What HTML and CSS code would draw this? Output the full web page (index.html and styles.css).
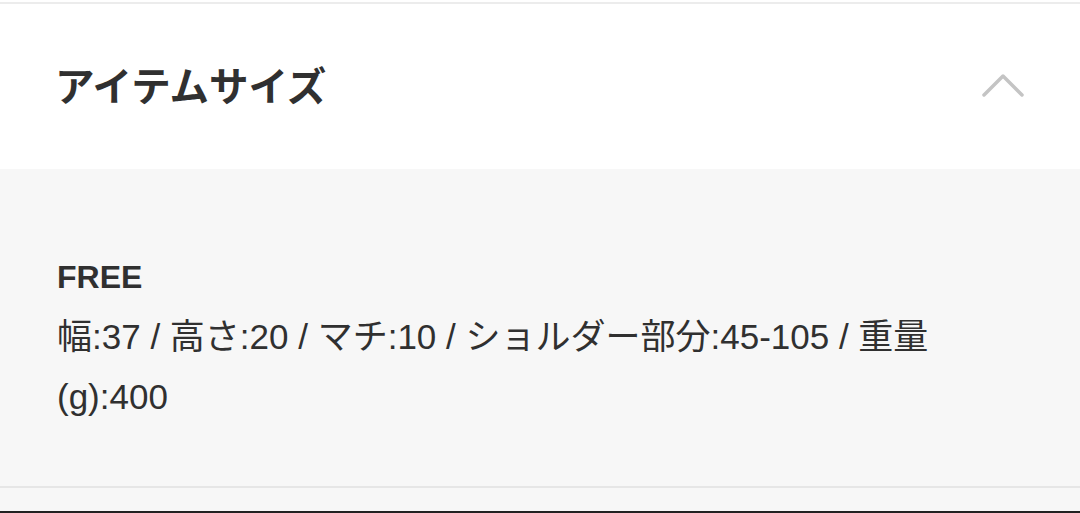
FILE: index.html
```html
<!DOCTYPE html>
<html lang="ja">
  <head>
    <meta charset="UTF-8" />
    <meta name="viewport" content="width=device-width, initial-scale=1.0" />
    <title>アイテムサイズ</title>
    <link rel="stylesheet" href="styles.css">
  </head>
  <body>
    <section class="accordion">
      <div class="accordion-header">
        <h2>アイテムサイズ</h2>
        <svg class="chevron" width="44" height="26" viewBox="0 0 44 26" aria-hidden="true">
          <polyline points="3,23 22,4 41,23" />
        </svg>
      </div>
      <div class="accordion-body">
        <p class="size-name">FREE</p>
        <p class="size-detail">幅:37 / 高さ:20 / マチ:10 / ショルダー部分:45-105 / 重量(g):400</p>
      </div>
    </section>
    <div class="next-section"></div>
  </body>
</html>
```

FILE: styles.css
```css
/* Page */
body {
  margin: 0;
  padding-top: 2px;
  font-family: "Liberation Sans", "Noto Sans CJK JP", sans-serif;
  color: #303030;
  background: #ffffff;
}

/* Accordion */
.accordion {
  border-top: 2px solid #ececec;
  border-bottom: 2px solid #e6e6e6;
}

.accordion-header {
  display: flex;
  justify-content: space-between;
  align-items: center;
  height: 165px;
  padding: 0 55px 0 55px;
  background: #ffffff;
}

.accordion-header h2 {
  margin: 0 0 6px;
  font-size: 39.5px;
  font-weight: bold;
}

.chevron {
  margin-bottom: 4px;
}

.chevron polyline {
  fill: none;
  stroke: #c4c4c4;
  stroke-width: 3.5;
  stroke-linecap: round;
  stroke-linejoin: round;
}

.accordion-body {
  background: #f7f7f7;
  padding: 88px 57px 59px;
}

.size-name {
  margin: 0 0 10px;
  font-size: 32px;
  font-weight: bold;
  line-height: 40px;
}

.size-detail {
  margin: 0;
  font-size: 35px;
  line-height: 60px;
}

/* Next row, cut off by the window */
.next-section {
  height: 23px;
  background: #f7f7f7;
  border-bottom: 2px solid #222222;
}
```
